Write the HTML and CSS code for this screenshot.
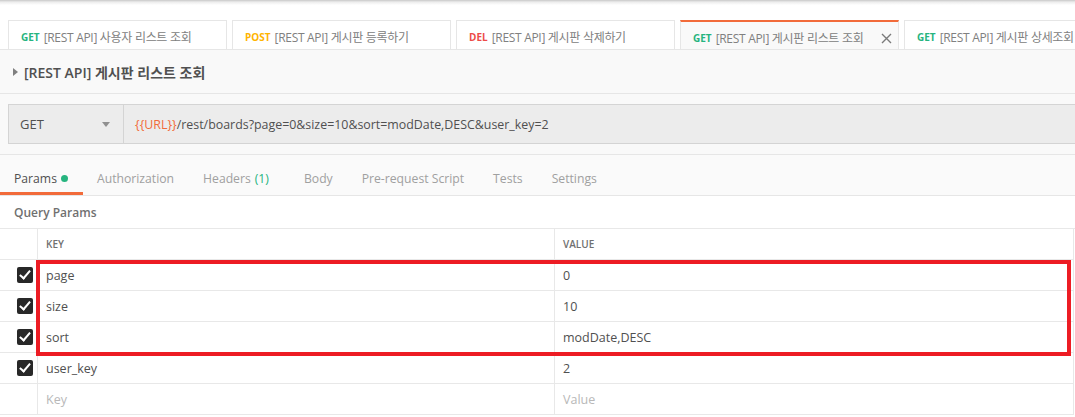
FILE: index.html
```html
<!DOCTYPE html>
<html lang="en">
<head>
    <meta charset="UTF-8">
    <title>[REST API] 게시판 리스트 조회</title>
    <link rel="stylesheet" href="styles.css">
</head>
<body>
    <div class="tabbar">
        <div class="tab"><span class="method get">GET</span><span class="tab-name">[REST API] 사용자 리스트 조회</span></div>
        <div class="tab"><span class="method post">POST</span><span class="tab-name">[REST API] 게시판 등록하기</span></div>
        <div class="tab"><span class="method del">DEL</span><span class="tab-name">[REST API] 게시판 삭제하기</span></div>
        <div class="tab active">
            <span class="method get">GET</span><span class="tab-name">[REST API] 게시판 리스트 조회</span>
            <svg class="close" width="11" height="11" viewBox="0 0 11 11"><path d="M1 1L10 10M10 1L1 10" stroke="#7a7a7a" stroke-width="1.4" fill="none"/></svg>
        </div>
        <div class="tab"><span class="method get">GET</span><span class="tab-name">[REST API] 게시판 상세조회</span></div>
    </div>

    <div class="request-name">
        <span class="caret"></span>
        <span>[REST API] 게시판 리스트 조회</span>
    </div>

    <div class="url-section">
        <div class="url-bar">
            <div class="method-select">
                <span>GET</span>
                <span class="drop"></span>
            </div>
            <div class="url-input"><span class="var">{{URL}}</span>/rest/boards?page=0&amp;size=10&amp;sort=modDate,DESC&amp;user_key=2</div>
        </div>
    </div>

    <div class="req-tabs">
        <div class="req-tab selected">Params <span class="dot"></span></div>
        <div class="req-tab">Authorization</div>
        <div class="req-tab headers">Headers <span class="count">(1)</span></div>
        <div class="req-tab">Body</div>
        <div class="req-tab">Pre-request Script</div>
        <div class="req-tab">Tests</div>
        <div class="req-tab">Settings</div>
    </div>

    <div class="section-title">Query Params</div>

    <div class="params">
        <div class="row head">
            <div class="cell check"></div>
            <div class="cell key">KEY</div>
            <div class="cell value">VALUE</div>
        </div>
        <div class="row">
            <div class="cell check"><span class="box"></span></div>
            <div class="cell key">page</div>
            <div class="cell value">0</div>
        </div>
        <div class="row">
            <div class="cell check"><span class="box"></span></div>
            <div class="cell key">size</div>
            <div class="cell value">10</div>
        </div>
        <div class="row">
            <div class="cell check"><span class="box"></span></div>
            <div class="cell key">sort</div>
            <div class="cell value">modDate,DESC</div>
        </div>
        <div class="row">
            <div class="cell check"><span class="box"></span></div>
            <div class="cell key">user_key</div>
            <div class="cell value">2</div>
        </div>
        <div class="row empty">
            <div class="cell check"></div>
            <div class="cell key">Key</div>
            <div class="cell value">Value</div>
        </div>
        <div class="highlight"></div>
    </div>
</body>
</html>
```

FILE: styles.css
```css
body {
    margin: 0;
    width: 1075px;
    height: 417px;
    overflow: hidden;
    background: #ffffff;
    font-family: "Open Sans", "Noto Sans CJK KR", sans-serif;
    color: #505050;
}

/* top tabs */
.tabbar {
    display: flex;
    gap: 5px;
    height: 50px;
    box-sizing: border-box;
    padding: 20px 0 0 8px;
    background: linear-gradient(#c8c8c8 0, #ececec 2px, #ffffff 5px);
    border-bottom: 1px solid #e6e6e6;
    overflow: hidden;
}
.tab {
    flex: 0 0 219px;
    height: 30px;
    box-sizing: border-box;
    display: flex;
    align-items: center;
    padding: 3px 6px 0 12px;
    background: #ffffff;
    border: 1px solid #e6e6e6;
    border-bottom: none;
    font-size: 12px;
    white-space: nowrap;
}
.tab.active {
    background: #f9f9f9;
    border-top: 2px solid #f26b3a;
    height: 31px;
    position: relative;
    z-index: 1;
}
.method {
    font-size: 10px;
    font-weight: 700;
    margin-right: 4px;
}
.method.get { color: #26b47f; }
.method.post { color: #ffb400; }
.method.del { color: #ed4b48; }
.tab-name {
    color: #808080;
    letter-spacing: -0.3px;
}
.close {
    margin-left: auto;
}

/* request name */
.request-name {
    height: 44px;
    box-sizing: border-box;
    display: flex;
    align-items: center;
    padding-left: 13px;
    gap: 6px;
    background: #f9f9f9;
    border-bottom: 1px solid #e6e6e6;
    font-size: 14px;
    font-weight: 600;
    color: #505050;
}
.caret {
    width: 0;
    height: 0;
    border-top: 4px solid transparent;
    border-bottom: 4px solid transparent;
    border-left: 5px solid #808080;
}

/* url */
.url-section {
    background: #f9f9f9;
    padding: 10px 0 10px 8px;
    border-bottom: 1px solid #e6e6e6;
}
.url-bar {
    display: flex;
    height: 40px;
    box-sizing: border-box;
    background: #ececec;
    border: 1px solid #d4d4d4;
    border-right: none;
}
.method-select {
    width: 115px;
    display: flex;
    align-items: center;
    justify-content: space-between;
    padding: 0 13px 0 11px;
    box-sizing: border-box;
    border-right: 1px solid #d4d4d4;
    font-size: 13px;
    color: #505050;
}
.drop {
    width: 0;
    height: 0;
    border-left: 4px solid transparent;
    border-right: 4px solid transparent;
    border-top: 5px solid #909090;
}
.url-input {
    display: flex;
    align-items: center;
    padding-left: 11px;
    font-size: 12.4px;
    color: #505050;
}
.var {
    color: #f26b3a;
}

/* request tabs */
.req-tabs {
    display: flex;
    height: 41px;
    box-sizing: border-box;
    background: #fafafa;
    border-bottom: 1px solid #e6e6e6;
}
.req-tab {
    display: flex;
    align-items: center;
    gap: 4px;
    padding: 10px 15px 0 14px;
    border-bottom: 3px solid transparent;
    font-size: 12.2px;
    color: #a0a0a0;
}
.req-tab.headers {
    padding-right: 21px;
}
.req-tab.selected {
    color: #505050;
    border-bottom-color: #f26b3a;
}
.dot {
    width: 7px;
    height: 7px;
    border-radius: 50%;
    background: #26b47f;
}
.count {
    color: #26b47f;
}

.section-title {
    height: 33px;
    box-sizing: border-box;
    display: flex;
    align-items: center;
    padding-left: 14px;
    font-size: 12px;
    font-weight: 600;
    color: #707070;
    border-bottom: 1px solid #e8e8e8;
}

/* params table */
.params {
    position: relative;
    width: 1073px;
    border-right: 1px solid #e8e8e8;
}
.row {
    display: flex;
    height: 31px;
    box-sizing: border-box;
    border-bottom: 1px solid #e8e8e8;
    font-size: 12.5px;
    color: #505050;
}
.cell {
    display: flex;
    align-items: center;
}
.cell.check {
    width: 38px;
    justify-content: flex-end;
    padding-right: 4px;
    box-sizing: border-box;
    border-right: 1px solid #e8e8e8;
}
.cell.key {
    width: 517px;
    padding-left: 8px;
    box-sizing: border-box;
    border-right: 1px solid #e8e8e8;
}
.cell.value {
    flex: 1;
    padding-left: 8px;
}
.row.head {
    font-size: 10px;
    font-weight: 600;
    color: #707070;
}
.row.empty {
    color: #b8b8b8;
}
.box {
    position: relative;
    width: 16px;
    height: 16px;
    border-radius: 2px;
    background: #282828;
}
.box::after {
    content: "";
    position: absolute;
    left: 5px;
    top: 1px;
    width: 4px;
    height: 9px;
    border-right: 2px solid #ffffff;
    border-bottom: 2px solid #ffffff;
    transform: rotate(40deg);
}
.highlight {
    position: absolute;
    left: 36px;
    top: 31px;
    width: 1035px;
    height: 96px;
    box-sizing: border-box;
    border: 4px solid #ed1c24;
}
```
